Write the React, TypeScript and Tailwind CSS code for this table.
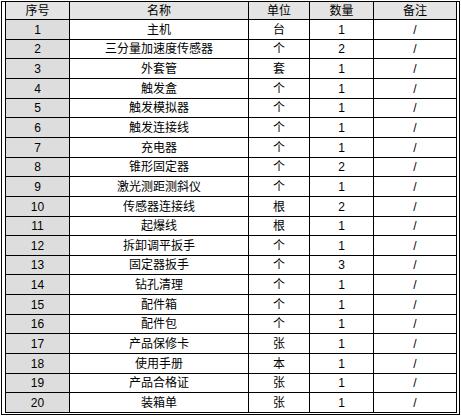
const rows: [string, string, string, string][] = [
  ["1", "主机", "台", "1"],
  ["2", "三分量加速度传感器", "个", "2"],
  ["3", "外套管", "套", "1"],
  ["4", "触发盒", "个", "1"],
  ["5", "触发模拟器", "个", "1"],
  ["6", "触发连接线", "个", "1"],
  ["7", "充电器", "个", "1"],
  ["8", "锥形固定器", "个", "2"],
  ["9", "激光测距测斜仪", "个", "1"],
  ["10", "传感器连接线", "根", "2"],
  ["11", "起爆线", "根", "1"],
  ["12", "拆卸调平扳手", "个", "1"],
  ["13", "固定器扳手", "个", "3"],
  ["14", "钻孔清理", "个", "1"],
  ["15", "配件箱", "个", "1"],
  ["16", "配件包", "个", "1"],
  ["17", "产品保修卡", "张", "1"],
  ["18", "使用手册", "本", "1"],
  ["19", "产品合格证", "张", "1"],
  ["20", "装箱单", "张", "1"],
];

const heights = [
  "h-[20px]", "h-[19px]", "h-[20px]", "h-[20px]", "h-[19px]",
  "h-[20px]", "h-[20px]", "h-[19px]", "h-[20px]", "h-[20px]",
  "h-[19px]", "h-[20px]", "h-[19px]", "h-[20px]", "h-[20px]",
  "h-[19px]", "h-[20px]", "h-[20px]", "h-[19px]", "h-[20px]",
];

const cell = "flex items-center justify-center border-r border-black";

export default function App() {
  return (
    <div className="w-[461px] h-[417px] bg-white pl-[1px] pt-[1px] text-[12px] leading-none text-black font-['Liberation_Sans','Noto_Sans_CJK_SC',sans-serif]">
      <div className="w-[459px] border-l border-r border-t border-b border-black pl-[3px] pr-[2px] pb-[1px]">
        <div className="w-[452px] border-l border-black">
          <div className="flex h-[18px] border-b border-black bg-[#e4e4e4]">
            <div className={`${cell} w-[64px]`}>序号</div>
            <div className={`${cell} w-[179px]`}>名称</div>
            <div className={`${cell} w-[61px]`}>单位</div>
            <div className={`${cell} w-[64px]`}>数量</div>
            <div className={`${cell} w-[83px]`}>备注</div>
          </div>
          {rows.map((r, i) => (
            <div key={r[0]} className={`flex border-b border-black ${heights[i]}`}>
              <div className={`${cell} w-[64px] bg-[#dddddd]`}>{r[0]}</div>
              <div className={`${cell} w-[179px]`}>{r[1]}</div>
              <div className={`${cell} w-[61px]`}>{r[2]}</div>
              <div className={`${cell} w-[64px]`}>{r[3]}</div>
              <div className={`${cell} w-[83px]`}>/</div>
            </div>
          ))}
        </div>
      </div>
    </div>
  );
}
